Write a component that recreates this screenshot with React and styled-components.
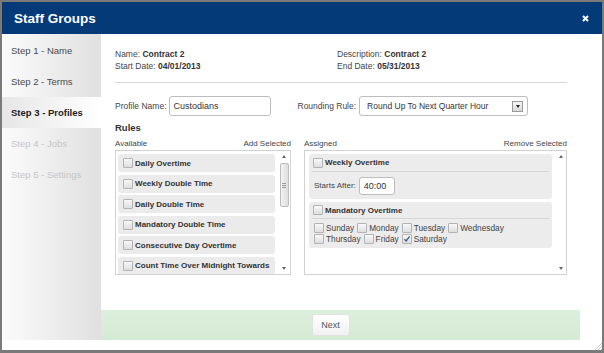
import React from "react";
import styled, { createGlobalStyle } from "styled-components";

const GlobalStyle = createGlobalStyle`
  html, body {
    margin: 0;
    padding: 0;
    background: #7a7a7a;
  }
  * {
    box-sizing: border-box;
  }
`;

const Window = styled.div`
  position: relative;
  width: 604px;
  height: 353px;
  display: flex;
  flex-direction: column;
  background: #fff;
  border: 2px solid #7a7a7a;
  border-bottom-width: 3px;
  padding-bottom: 10px;
  font-family: "Liberation Sans", Arial, sans-serif;
  color: #444;
  overflow: hidden;
`;

const Header = styled.div`
  height: 32px;
  flex: none;
  display: flex;
  align-items: center;
  justify-content: space-between;
  padding: 0 13px 0 12px;
  background: #033a77;
`;

const Title = styled.h1`
  margin: 0;
  font-size: 13.5px;
  font-weight: 700;
  color: #fff;
`;

const Close = styled.button`
  border: 0;
  padding: 0;
  background: none;
  display: flex;
  cursor: pointer;
`;

const Body = styled.div`
  flex: 1;
  display: flex;
  min-height: 0;
`;

const Sidebar = styled.nav`
  width: 99px;
  flex: none;
  background: linear-gradient(to right, #fbfbfb, #e0e0e0);
`;

const stepColor = { done: "#4a4a4a", active: "#222", todo: "#c6c6c6" };

const Step = styled.div`
  height: 31px;
  display: flex;
  align-items: center;
  padding-left: 9px;
  font-size: 9.5px;
  font-weight: ${({ $state }) => ($state === "active" ? 700 : 400)};
  color: ${({ $state }) => stepColor[$state]};
  background: ${({ $state }) =>
    $state === "active" ? "linear-gradient(to right, #e6e6e6, #ffffff)" : "transparent"};
  &:first-child {
    margin-top: 1px;
  }
`;

const Main = styled.main`
  flex: 1;
  display: flex;
  flex-direction: column;
  margin-right: 22px;
`;

const Content = styled.div`
  flex: 1;
  padding: 14px 13px 0 14px;
`;

const InfoGrid = styled.div`
  display: grid;
  grid-template-columns: 222px 1fr;
  font-size: 8.5px;
  line-height: 12px;
  color: #444;
  b {
    color: #333;
  }
`;

const Divider = styled.hr`
  margin: 10px 0 0;
  border: 0;
  height: 1px;
  background: #d6d6d6;
`;

const FormRow = styled.div`
  margin-top: 13px;
  display: flex;
  align-items: center;
  height: 20px;
  font-size: 8.5px;
`;

const Label = styled.label`
  margin-left: ${({ $offset }) => $offset || 0}px;
  margin-right: ${({ $gap }) => $gap || 2}px;
  color: #444;
`;

const TextInput = styled.div`
  width: ${({ $w }) => $w}px;
  height: ${({ $h }) => $h || 20}px;
  display: flex;
  align-items: center;
  padding-left: 4px;
  border: 1px solid #bdbdbd;
  border-radius: 3px;
  background: #fff;
  font-size: 9px;
  color: #333;
`;

const Select = styled(TextInput)`
  justify-content: space-between;
  padding: 0 4px 0 7px;
  font-size: 8.5px;
`;

const SelectArrow = styled.span`
  width: 11px;
  height: 11px;
  border: 1px solid #9a9a9a;
  background: linear-gradient(#f8f8f8, #d8d8d8);
  display: flex;
  align-items: center;
  justify-content: center;
  &::after {
    content: "";
    border-left: 2.5px solid transparent;
    border-right: 2.5px solid transparent;
    border-top: 3px solid #222;
  }
`;

const SectionTitle = styled.h2`
  margin: 6px 0 0;
  font-size: 9.5px;
  line-height: 12px;
  font-weight: 700;
  color: #333;
`;

const Columns = styled.div`
  display: flex;
  gap: 13px;
  margin-top: 5px;
`;

const Column = styled.section`
  width: ${({ $w }) => $w}px;
  flex: none;
`;

const ColumnHead = styled.div`
  display: flex;
  justify-content: space-between;
  font-size: 8px;
  line-height: 10px;
  color: #444;
`;

const ListBox = styled.div`
  margin-top: 1px;
  height: 125px;
  display: flex;
  border: 1px solid #d2d2d2;
  background: #fff;
  overflow: hidden;
`;

const ListArea = styled.div`
  width: ${({ $w }) => $w}px;
  margin: 0 ${({ $gap }) => $gap}px 0 ${({ $pad }) => $pad}px;
  padding-top: 3px;
  display: flex;
  flex-direction: column;
  gap: ${({ $spacing }) => $spacing}px;
  overflow: hidden;
`;

const Item = styled.div`
  flex: none;
  height: 18px;
  display: flex;
  align-items: center;
  padding-left: 5px;
  border-radius: 3px;
  background: #ebebeb;
  font-size: 8px;
  font-weight: 700;
  color: #333;
  white-space: nowrap;
`;

const Box = styled.span`
  flex: none;
  position: relative;
  width: 10px;
  height: 10px;
  margin-right: 2px;
  border: 1px solid #b3b3b3;
  border-radius: 1px;
  background: linear-gradient(#f8f8f8, #dedede);
`;

const Check = ({ checked }) => (
  <Box>
    {checked && (
      <svg width="8" height="8" viewBox="0 0 8 8" style={{ position: "absolute", left: 0, top: 0 }}>
        <path d="M1.5 4.2 L3.2 6 L6.6 1.4" fill="none" stroke="#35608f" strokeWidth="1.3" />
      </svg>
    )}
  </Box>
);

const Scrollbar = styled.div`
  width: ${({ $w }) => $w}px;
  flex: none;
  display: flex;
  flex-direction: column;
  align-items: center;
  padding: 4px 0 4px;
`;

const Arrow = styled.span`
  width: 0;
  height: 0;
  border-left: 2.5px solid transparent;
  border-right: 2.5px solid transparent;
  ${({ $down }) =>
    $down
      ? "border-top: 3px solid #666; margin-top: auto;"
      : "border-bottom: 3px solid #666;"}
`;

const Thumb = styled.span`
  width: 9px;
  height: 44px;
  margin-top: 5px;
  border: 1px solid #bcbcbc;
  border-radius: 2px;
  background: linear-gradient(to right, #f2f2f2, #dedede);
  display: flex;
  flex-direction: column;
  justify-content: center;
  align-items: center;
  gap: 1px;
  i {
    width: 4px;
    height: 1px;
    background: #9a9a9a;
  }
`;

const Group = styled.div`
  flex: none;
  border-radius: 3px;
  background: #ececec;
  padding: 0 3px;
`;

const GroupHead = styled.div`
  height: ${({ $h }) => $h}px;
  display: flex;
  align-items: center;
  padding-left: 1px;
  border-bottom: 1px solid #d7d7d7;
  font-size: 8px;
  font-weight: 700;
  color: #333;
`;

const StartsRow = styled.div`
  height: 27px;
  display: flex;
  align-items: center;
  padding-left: 2px;
  font-size: 8px;
  color: #444;
`;

const Days = styled.div`
  display: flex;
  flex-wrap: wrap;
  max-width: 205px;
  padding: 4px 0 4px 2px;
  column-gap: 3px;
`;

const Day = styled.span`
  display: flex;
  align-items: center;
  height: 10.7px;
  font-size: 8.3px;
  color: #444;
`;

const Footer = styled.div`
  height: 30px;
  flex: none;
  display: flex;
  align-items: center;
  justify-content: center;
  padding-right: 20px;
  background: linear-gradient(#dcefdc, #d5ead5);
`;

const NextButton = styled.button`
  width: 38px;
  height: 22px;
  padding: 0;
  border: 1px solid #e2e2e2;
  border-radius: 3px;
  background: linear-gradient(#ffffff, #f1f1f1);
  font-family: "Liberation Sans", Arial, sans-serif;
  font-size: 9px;
  color: #555;
  cursor: pointer;
`;

const Grip = styled.svg`
  position: absolute;
  right: 0;
  bottom: 0;
`;

const steps = [
  { label: "Step 1 - Name", state: "done" },
  { label: "Step 2 - Terms", state: "done" },
  { label: "Step 3 - Profiles", state: "active" },
  { label: "Step 4 - Jobs", state: "todo" },
  { label: "Step 5 - Settings", state: "todo" },
];

const available = [
  "Daily Overtime",
  "Weekly Double Time",
  "Daily Double Time",
  "Mandatory Double Time",
  "Consecutive Day Overtime",
  "Count Time Over Midnight Towards",
];

const days = [
  { name: "Sunday" },
  { name: "Monday" },
  { name: "Tuesday" },
  { name: "Wednesday" },
  { name: "Thursday" },
  { name: "Friday" },
  { name: "Saturday", checked: true },
];

export default function App() {
  return (
    <>
      <GlobalStyle />
      <Window>
        <Header>
          <Title>Staff Groups</Title>
          <Close aria-label="Close">
            <svg width="7" height="7" viewBox="0 0 7 7">
              <path d="M1 1 L6 6 M6 1 L1 6" stroke="#fff" strokeWidth="2" />
            </svg>
          </Close>
        </Header>
        <Body>
          <Sidebar>
            {steps.map((s) => (
              <Step key={s.label} $state={s.state}>
                {s.label}
              </Step>
            ))}
          </Sidebar>
          <Main>
            <Content>
              <InfoGrid>
                <div>
                  Name: <b>Contract 2</b>
                </div>
                <div>
                  Description: <b>Contract 2</b>
                </div>
                <div>
                  Start Date: <b>04/01/2013</b>
                </div>
                <div>
                  End Date: <b>05/31/2013</b>
                </div>
              </InfoGrid>
              <Divider />
              <FormRow>
                <Label>Profile Name:</Label>
                <TextInput $w={102}>Custodians</TextInput>
                <Label $offset={27} $gap={3}>
                  Rounding Rule:
                </Label>
                <Select $w={169}>
                  Round Up To Next Quarter Hour
                  <SelectArrow />
                </Select>
              </FormRow>
              <SectionTitle>Rules</SectionTitle>
              <Columns>
                <Column $w={176}>
                  <ColumnHead>
                    <span>Available</span>
                    <span>Add Selected</span>
                  </ColumnHead>
                  <ListBox>
                    <ListArea $w={157} $pad={2} $gap={3} $spacing={2.6}>
                      {available.map((name) => (
                        <Item key={name}>
                          <Check />
                          {name}
                        </Item>
                      ))}
                    </ListArea>
                    <Scrollbar $w={12}>
                      <Arrow />
                      <Thumb>
                        <i />
                        <i />
                        <i />
                      </Thumb>
                      <Arrow $down />
                    </Scrollbar>
                  </ListBox>
                </Column>
                <Column $w={263}>
                  <ColumnHead>
                    <span>Assigned</span>
                    <span>Remove Selected</span>
                  </ColumnHead>
                  <ListBox>
                    <ListArea $w={243} $pad={4} $gap={4} $spacing={3.4}>
                      <Group>
                        <GroupHead $h={18}>
                          <Check />
                          Weekly Overtime
                        </GroupHead>
                        <StartsRow>
                          <Label $gap={3}>Starts After:</Label>
                          <TextInput $w={36} $h={18}>
                            40:00
                          </TextInput>
                        </StartsRow>
                      </Group>
                      <Group>
                        <GroupHead $h={16.5}>
                          <Check />
                          Mandatory Overtime
                        </GroupHead>
                        <Days>
                          {days.map((d) => (
                            <Day key={d.name}>
                              <Check checked={d.checked} />
                              {d.name}
                            </Day>
                          ))}
                        </Days>
                      </Group>
                    </ListArea>
                    <Scrollbar $w={10}>
                      <Arrow />
                      <Arrow $down />
                    </Scrollbar>
                  </ListBox>
                </Column>
              </Columns>
            </Content>
            <Footer>
              <NextButton>Next</NextButton>
            </Footer>
          </Main>
        </Body>
        <Grip width="8" height="8" viewBox="0 0 8 8">
          <path d="M1 8 L8 1 M4 8 L8 4 M7 8 L8 7" stroke="#c8c8c8" strokeWidth="1" />
        </Grip>
      </Window>
    </>
  );
}
